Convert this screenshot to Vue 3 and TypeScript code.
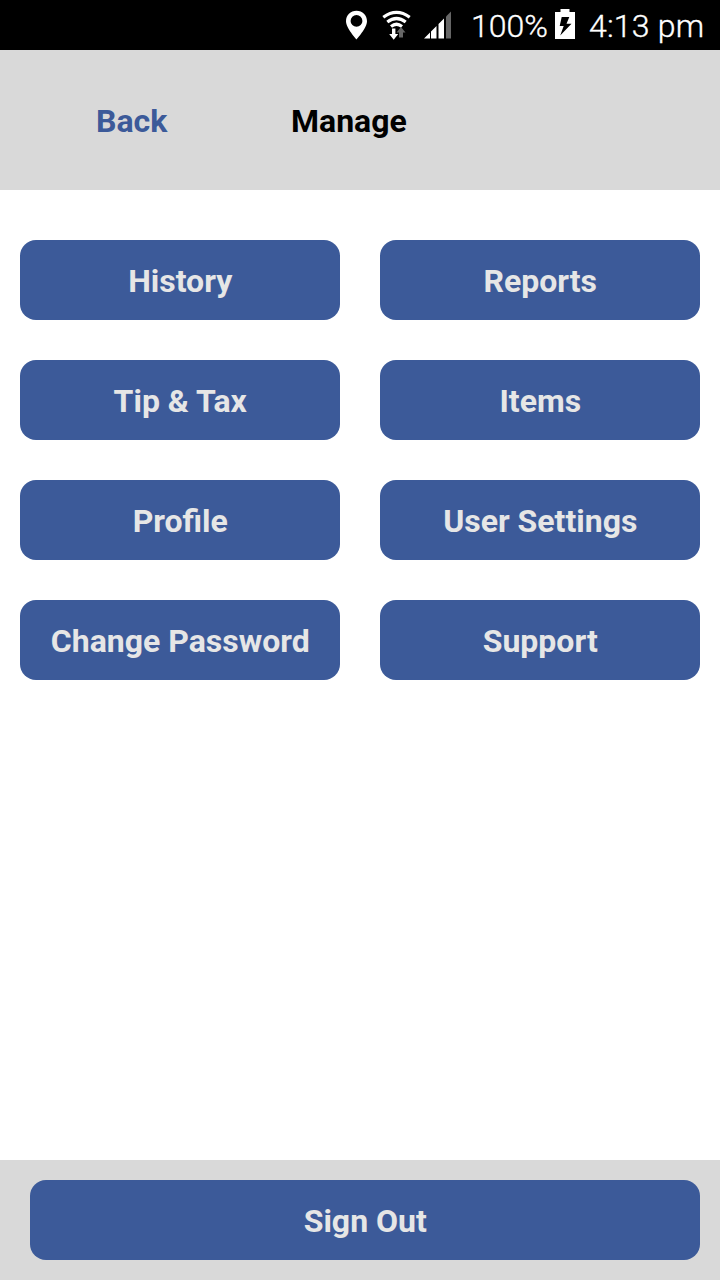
<script setup lang="ts">
const actions: string[] = [
  'History', 'Reports',
  'Tip & Tax', 'Items',
  'Profile', 'User Settings',
  'Change Password', 'Support',
]
</script>

<template>
  <div class="screen">
    <div class="status">
      <svg class="icons" width="120" height="50" viewBox="340 0 120 50">
        <path fill="#fff" fill-rule="evenodd" d="M356.500 10.800c-6 0-10.500 4.500-10.500 10.500C346 28 356.500 39.500 356.500 39.500S367 28 367 21.300C367 15.300 362.500 10.800 356.500 10.800zm0 4.200a5.900 5.900 0 1 1 0 11.800 5.900 5.900 0 0 1 0-11.800z" />
        <g fill="none" stroke="#fff" stroke-width="3.200">
          <path d="M383.300 17.200Q396.500 7.600 409.700 17.200" />
          <path d="M387.300 22Q396.500 15 405.700 22" />
          <path d="M391 26.500Q396.500 22 402 26.500" />
        </g>
        <path fill="#666" d="M399 37.500h4v-5h2.500l-4.500-5.500-4.500 5.500h2.500z" />
        <path fill="#fff" d="M392 28.500h3.400v5.500h2.800l-4.500 5.700-4.500-5.700h2.800z" />
        <path fill="#fff" d="M424 38.500l6-6v6zM431 38.500v-7l5.500-5.500v12.500zM438.500 38.500v-14.500l5.500-5.500v20z" />
        <path fill="#666" d="M446 38.500v-22l5-5v27z" />
      </svg>
      <span class="percent">100%</span>
      <svg class="battery" width="20" height="30" viewBox="0 0 20 30">
        <path fill="#fff" fill-rule="evenodd" d="M5.500 0h9v3H20v27H0V3h5.500zM6.700 8L4.700 17h4L5.200 26.500 16.500 14.700h-5L14.300 8z" />
      </svg>
      <span class="time">4:13 pm</span>
    </div>
    <header class="header">
      <span class="back">Back</span>
      <h1 class="title">Manage</h1>
    </header>
    <main class="grid">
      <button v-for="action in actions" :key="action" class="button">{{ action }}</button>
    </main>
    <footer class="footer">
      <button class="button">Sign Out</button>
    </footer>
  </div>
</template>

<style>
body { margin: 0; }
</style>

<style scoped>
.screen { width: 720px; height: 1280px; display: flex; flex-direction: column; background: #fff; font-family: Roboto, "Liberation Sans", sans-serif; overflow: hidden; }
.status { height: 50px; flex: none; display: flex; background: #000; color: #fff; font-size: 32px; font-weight: 300; line-height: 52px; white-space: nowrap; -webkit-text-stroke: 0.35px #fff; }
.icons { margin-left: 340px; flex: none; }
.percent { width: 84px; margin-left: 11px; flex: none; }
.battery { margin-top: 9px; flex: none; }
.time { margin-left: 14px; letter-spacing: 0.2px; }
.header { box-sizing: border-box; height: 140px; flex: none; display: flex; background: #d9d9d9; font-size: 32px; line-height: 142px; font-weight: 700; padding-left: 96px; }
.back { width: 195px; color: #3c5a99; }
.title { margin: 0; font-size: 32px; font-weight: 700; color: #000; }
.grid { flex: 1; display: grid; grid-template-columns: 320px 320px; grid-auto-rows: 80px; align-content: start; gap: 40px; padding: 50px 20px 0; }
.button { border: 0; border-radius: 16px; padding: 2px 0 0; background: #3c5a99; color: #e6e6e6; font: 700 32px Roboto, "Liberation Sans", sans-serif; text-indent: 0.5px; }
.footer { box-sizing: border-box; height: 120px; flex: none; padding: 20px 20px 20px 30px; background: #d9d9d9; display: grid; }
</style>
